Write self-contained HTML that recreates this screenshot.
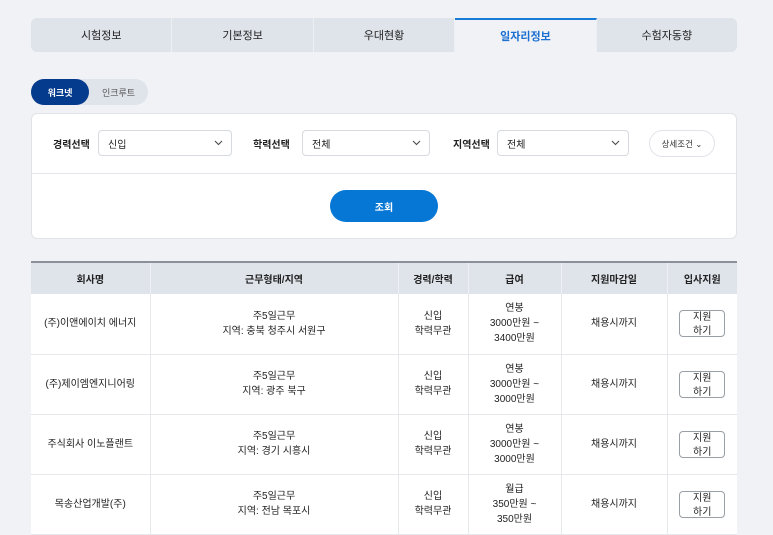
<!DOCTYPE html>
<html><head><meta charset="utf-8"><style>
*{box-sizing:border-box;margin:0;padding:0}
body{width:773px;height:530px;overflow:hidden;background:#f0f2f6;font-family:"Liberation Sans","Noto Sans CJK KR",sans-serif;color:#222;font-size:11px;position:relative}
.tabs{position:absolute;left:31px;top:18px;width:706px;height:34px;display:flex;background:#dfe3ea;border-radius:6px;overflow:hidden}
.tabs div{flex:1;display:flex;align-items:center;justify-content:center;border-right:1px solid #eceff3;font-size:11px;color:#222}
.tabs div:last-child{border-right:none}
.tabs .on{background:#f0f2f6;color:#1a6fd0;border-top:2px solid #1a7ad8;font-weight:bold}
.tog{position:absolute;left:31px;top:79px;width:117px;height:26px;background:#dfe3ea;border-radius:13px}
.tog .a{position:absolute;left:0;top:0;width:58px;height:26px;background:#053b8c;border-radius:13px;color:#fff;font-weight:bold;font-size:9px;display:flex;align-items:center;justify-content:center}
.tog .b{position:absolute;left:58px;top:0;width:59px;height:26px;color:#555;font-size:9px;display:flex;align-items:center;justify-content:center}
.box{position:absolute;left:31px;top:113px;width:706px;height:126px;background:#fff;border:1px solid #e0e3e8;border-radius:6px}
.line{position:absolute;left:0;right:0;top:59px;border-top:1px solid #e3e5ea}
.lbl{position:absolute;top:16px;height:26px;display:flex;align-items:center;font-weight:bold;font-size:10px}
.sel{position:absolute;top:16px;height:26px;border:1px solid #d6d9de;border-radius:4px;padding-left:9px;display:flex;align-items:center;font-size:10px}
.sel svg{position:absolute;right:8px;top:9px}
.det{position:absolute;left:617px;top:16px;width:66px;height:27px;border:1px solid #e0e3e8;border-radius:14px;font-size:8.5px;display:flex;align-items:center;justify-content:center;color:#333}
.btn{position:absolute;left:298px;top:76px;width:108px;height:32px;background:#0677d5;border-radius:16px;color:#fff;font-size:10px;font-weight:bold;display:flex;align-items:center;justify-content:center}
table{position:absolute;left:31px;top:261px;width:706px;border-collapse:collapse;background:#fff;border-top:2px solid #8c9098}
th{background:#dfe3ea;height:32px;font-size:10px;font-weight:bold;border-right:1px solid #eef0f3}
td{height:60px;text-align:center;border-right:1px solid #e6e8ec;border-bottom:1px solid #e6e8ec;font-size:10px;line-height:15px}
th:last-child,td:last-child{border-right:none}
.ap{display:inline-block;width:46px;height:27px;border:1px solid #9a9ea5;border-radius:4px;font-size:10px;line-height:14px;padding-top:0;vertical-align:middle}
</style></head><body>
<div class="tabs"><div>시험정보</div><div>기본정보</div><div>우대현황</div><div class="on">일자리정보</div><div>수험자동향</div></div>
<div class="tog"><div class="a">워크넷</div><div class="b">인크루트</div></div>
<div class="box">
<div class="lbl" style="left:21px">경력선택</div>
<div class="sel" style="left:66px;width:134px">신입<svg width="9" height="6"><path d="M1 1l3.5 3.5L8 1" stroke="#444" fill="none"/></svg></div>
<div class="lbl" style="left:221px">학력선택</div>
<div class="sel" style="left:270px;width:128px">전체<svg width="9" height="6"><path d="M1 1l3.5 3.5L8 1" stroke="#444" fill="none"/></svg></div>
<div class="lbl" style="left:421px">지역선택</div>
<div class="sel" style="left:465px;width:132px">전체<svg width="9" height="6"><path d="M1 1l3.5 3.5L8 1" stroke="#444" fill="none"/></svg></div>
<div class="det">상세조건 ⌄</div>
<div class="line"></div>
<div class="btn">조회</div>
</div>
<table>
<tr><th style="width:119px">회사명</th><th style="width:248px">근무형태/지역</th><th style="width:70px">경력/학력</th><th style="width:93px">급여</th><th style="width:106px">지원마감일</th><th>입사지원</th></tr>
<tr><td>(주)이앤에이치 에너지</td><td>주5일근무<br>지역: 충북 청주시 서원구</td><td>신입<br>학력무관</td><td>연봉<br>3000만원 ~<br>3400만원</td><td>채용시까지</td><td><span class="ap">지원<br>하기</span></td></tr>
<tr><td>(주)제이엠엔지니어링</td><td>주5일근무<br>지역: 광주 북구</td><td>신입<br>학력무관</td><td>연봉<br>3000만원 ~<br>3000만원</td><td>채용시까지</td><td><span class="ap">지원<br>하기</span></td></tr>
<tr><td>주식회사 이노플랜트</td><td>주5일근무<br>지역: 경기 시흥시</td><td>신입<br>학력무관</td><td>연봉<br>3000만원 ~<br>3000만원</td><td>채용시까지</td><td><span class="ap">지원<br>하기</span></td></tr>
<tr><td>목송산업개발(주)</td><td>주5일근무<br>지역: 전남 목포시</td><td>신입<br>학력무관</td><td>월급<br>350만원 ~<br>350만원</td><td>채용시까지</td><td><span class="ap">지원<br>하기</span></td></tr>
</table>
</body></html>
